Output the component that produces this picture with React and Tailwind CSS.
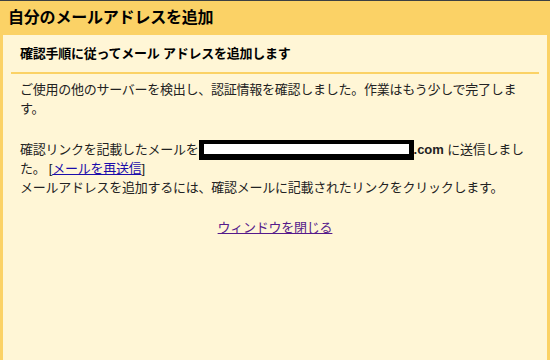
export default function App() {
  const font = { fontFamily: '"Liberation Sans", "Noto Sans CJK JP", sans-serif' };
  return (
    <div
      className="w-[550px] h-[360px] flex flex-col bg-[#fbd266] border-t border-[#3c4043] text-[#111] overflow-hidden"
      style={font}
    >
      <div className="h-[34px] shrink-0 flex items-center px-[8px]">
        <h1 className="text-[16px] font-bold tracking-[-0.2px] text-black">自分のメールアドレスを追加</h1>
      </div>
      <div className="flex-1 mx-[3px] bg-[#fff6d6] flex flex-col">
        <div className="pt-[9px] pl-[17px] h-[28px] leading-[19px] text-[13px] font-bold tracking-[-0.25px] text-black">
          確認手順に従ってメール アドレスを追加します
        </div>
        <div className="mx-[8px] mt-[9px] h-[2px] bg-[#fbd266]" />
        <div className="pl-[17px] pt-[6px] text-[13px] leading-[19px] tracking-[-0.25px] text-[#222]">
          <div className="whitespace-nowrap h-[19px]">ご使用の他のサーバーを検出し、認証情報を確認しました。作業はもう少しで完了しま</div>
          <div className="whitespace-nowrap h-[19px]">す。</div>
          <div className="mt-[22px] flex items-start whitespace-nowrap h-[19px]">
            <span>確認リンクを記載したメールを</span>
            <span className="inline-block w-[215px] h-[20px] bg-white border-black border-t-[4px] border-b-[6px] border-l-[5px] border-r-[5px]" />
            <span className="font-bold tracking-normal">.com</span>
            <span>&nbsp;に送信しまし</span>
          </div>
          <div className="whitespace-nowrap h-[19px]">
            た。 [<a href="#" className="text-[#1a0dab] underline">メールを再送信</a>]
          </div>
          <div className="whitespace-nowrap h-[19px]">メールアドレスを追加するには、確認メールに記載されたリンクをクリックします。</div>
          <div className="mt-[21px] pr-[17px] flex justify-center h-[19px]">
            <a href="#" className="text-[#551a8b] underline">ウィンドウを閉じる</a>
          </div>
        </div>
      </div>
    </div>
  );
}
